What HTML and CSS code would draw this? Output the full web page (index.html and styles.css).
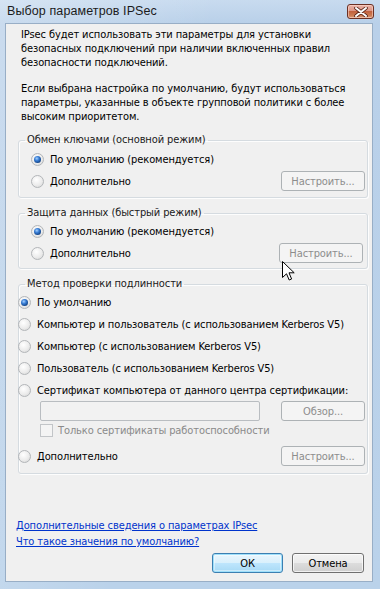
FILE: index.html
```html
<!DOCTYPE html>
<html lang="ru">
<head>
<meta charset="utf-8">
<title>Выбор параметров IPSec</title>
<link rel="stylesheet" href="styles.css">
</head>
<body>
<div class="window">
  <div class="titlebar">
    <span class="title">Выбор параметров IPSec</span>
    <span class="close">
      <svg width="14" height="10" viewBox="0 0 14 10">
        <path d="M2 1 L12 9 M12 1 L2 9" stroke="#5a2418" stroke-width="3.6" stroke-linecap="round"/>
        <path d="M2 1 L12 9 M12 1 L2 9" stroke="#ffffff" stroke-width="2" stroke-linecap="round"/>
      </svg>
    </span>
  </div>
  <div class="client">
    <p class="intro">IPsec будет использовать эти параметры для установки<br>безопасных подключений при наличии включенных правил<br>безопасности подключений.</p>
    <p class="intro second">Если выбрана настройка по умолчанию, будут использоваться<br>параметры, указанные в объекте групповой политики с более<br>высоким приоритетом.</p>

    <fieldset class="group g1">
      <legend>Обмен ключами (основной режим)</legend>
      <div class="row"><span class="radio checked"></span><span class="label">По умолчанию (рекомендуется)</span></div>
      <div class="row"><span class="radio"></span><span class="label">Дополнительно</span><button class="btn disabled">Настроить...</button></div>
    </fieldset>

    <fieldset class="group g2">
      <legend>Защита данных (быстрый режим)</legend>
      <div class="row"><span class="radio checked"></span><span class="label">По умолчанию (рекомендуется)</span></div>
      <div class="row"><span class="radio"></span><span class="label">Дополнительно</span><button class="btn disabled shifted">Настроить...</button></div>
      <svg class="cursor" width="13" height="20" viewBox="0 0 13 20">
        <path d="M0.5 0.5 L0.5 16.5 L4.5 12.8 L7.2 19 L9.6 18 L7 11.8 L12.2 11.8 Z" fill="#ffffff" stroke="#000000" stroke-width="1" stroke-linejoin="miter"/>
      </svg>
    </fieldset>

    <fieldset class="group g3">
      <legend>Метод проверки подлинности</legend>
      <div class="row"><span class="radio checked"></span><span class="label">По умолчанию</span></div>
      <div class="row"><span class="radio"></span><span class="label">Компьютер и пользователь (с использованием Kerberos V5)</span></div>
      <div class="row"><span class="radio"></span><span class="label">Компьютер (с использованием Kerberos V5)</span></div>
      <div class="row"><span class="radio"></span><span class="label">Пользователь (с использованием Kerberos V5)</span></div>
      <div class="row"><span class="radio"></span><span class="label">Сертификат компьютера от данного центра сертификации:</span></div>
      <div class="cert-row"><span class="textbox"></span><button class="btn disabled">Обзор...</button></div>
      <div class="check-row"><span class="checkbox"></span><span class="label muted">Только сертификаты работоспособности</span></div>
      <div class="row last"><span class="radio"></span><span class="label">Дополнительно</span><button class="btn disabled">Настроить...</button></div>
    </fieldset>

    <div class="footer">
      <a class="link" href="#">Дополнительные сведения о параметрах IPsec</a>
      <a class="link" href="#">Что такое значения по умолчанию?</a>
      <div class="actions">
        <button class="btn default">ОК</button>
        <button class="btn">Отмена</button>
      </div>
    </div>
  </div>
</div>
</body>
</html>
```

FILE: styles.css
```css
* { box-sizing: border-box; }

html, body {
  margin: 0;
  padding: 0;
}

body {
  width: 380px;
  height: 589px;
  overflow: hidden;
  font-family: "Liberation Sans Narrow", "DejaVu Sans Condensed", "Liberation Sans", Arial, sans-serif;
  font-size: 11px;
  letter-spacing: -0.1px;
  color: #000;
}

.window {
  width: 380px;
  height: 589px;
  display: flex;
  flex-direction: column;
  background:
    linear-gradient(100deg, rgba(255,255,255,0.25) 0%, rgba(255,255,255,0) 45%),
    linear-gradient(to bottom, #c8dbef 0px, #b9d0e9 23px, #bad2ea 100%);
}

.titlebar {
  height: 23px;
  flex: none;
  display: flex;
  align-items: flex-start;
  justify-content: space-between;
  padding: 4px 6px 0 7px;
}

.title {
  font-family: "Liberation Sans", Arial, sans-serif;
  font-size: 12.5px;
  line-height: 15px;
  color: #1b1b1b;
  letter-spacing: 0.1px;
}

.close {
  width: 27px;
  height: 15px;
  border: 1px solid #6b3024;
  border-radius: 3px;
  background: linear-gradient(to bottom, #eab3a8 0%, #dc9686 45%, #c2623f 50%, #cc7b52 80%, #d99a78 100%);
  box-shadow: inset 0 0 0 1px rgba(255,220,210,0.55);
  display: flex;
  align-items: center;
  justify-content: center;
}

.close svg { display: block; }

.client {
  flex: 1;
  margin: 0 7px 7px 5px;
  background: #f0f0f0;
  border: 1px solid #98aec6;
  display: flex;
  flex-direction: column;
  padding: 0 0 8px 0;
}

.intro {
  margin: 4px 0 0 15px;
  line-height: 14px;
}

.intro.second { margin-top: 12px; }

.group {
  position: relative;
  margin: 9px 4px 0 12px;
  padding: 1px 0 5px 0;
  border: 1px solid #d5dbe0;
  border-radius: 3px;
  box-shadow: inset 1px 1px 0 #fdfdfd, 1px 1px 0 #fdfdfd;
  min-width: 0;
}

.group legend {
  margin-left: 6px;
  padding: 0 2px;
  line-height: 14px;
  color: #1a1a1a;
}

.g2 { margin-top: 8px; padding: 0 0 4px 0; }
.g3 { margin-top: 8px; padding: 0 0 6px 0; }

.row {
  height: 22px;
  display: flex;
  align-items: center;
  padding-left: 12px;
  padding-right: 2px;
}

.g3 .row { padding-left: 0; margin-left: -1px; }

.label {
  margin-left: 6px;
  white-space: nowrap;
}

.muted { color: #8a8a8a; }

.radio {
  flex: none;
  width: 13px;
  height: 13px;
  border-radius: 50%;
  border: 1px solid #b3b6b9;
  background: radial-gradient(circle at 40% 35%, #ffffff 0%, #ececec 55%, #d3d3d3 100%);
  display: flex;
  align-items: center;
  justify-content: center;
}

.radio.checked::after {
  content: "";
  width: 7px;
  height: 7px;
  border-radius: 50%;
  background: radial-gradient(circle at 40% 35%, #a7d2ff 0%, #3a7fd6 35%, #16498f 70%, #0c2d63 100%);
}

.btn {
  font: inherit;
  letter-spacing: inherit;
  width: 84px;
  height: 20px;
  padding: 0;
  border: 1px solid #707070;
  border-radius: 3px;
  background: linear-gradient(to bottom, #f3f3f3 0%, #ebebeb 49%, #dddddd 50%, #cfcfcf 100%);
  color: #000;
  box-shadow: inset 0 0 0 1px rgba(255,255,255,0.7);
  flex: none;
}

.btn.disabled {
  border-color: #adb2b5;
  background: #f4f4f4;
  color: #8d8d8d;
  box-shadow: none;
  margin-left: auto;
}

.btn.shifted { margin-right: 2px; }

.cursor {
  position: absolute;
  left: 263px;
  top: 41px;
}

.cert-row {
  height: 20px;
  display: flex;
  align-items: center;
  padding-left: 21px;
  padding-right: 2px;
}

.textbox {
  width: 220px;
  height: 20px;
  border: 1px solid #b9bdc1;
  border-radius: 2px;
  background: #f2f2f2;
}

.check-row {
  height: 14px;
  margin-top: 2px;
  display: flex;
  align-items: center;
  padding-left: 21px;
}

.checkbox {
  width: 13px;
  height: 13px;
  border: 1px solid #c2c5c8;
  background: #f4f4f4;
}

.check-row .label { margin-left: 5px; }

.row.last { margin-top: 8px; }

.footer {
  margin-top: auto;
  display: flex;
  flex-direction: column;
  align-items: flex-start;
}

.link {
  margin-left: 10px;
  line-height: 16px;
  color: #0033cc;
  text-decoration: underline;
}

.actions {
  align-self: stretch;
  margin-top: 3px;
  display: flex;
  justify-content: flex-end;
  gap: 9px;
  padding-right: 8px;
}

.actions .btn { width: 72px; }

.btn.default {
  width: 71px;
  border-color: #3c7fb1;
  box-shadow: inset 0 0 0 1px #9fe0fb, inset 0 0 0 2px rgba(255,255,255,0.4);
  background: linear-gradient(to bottom, #eaf6fd 0%, #d9f0fc 49%, #bee6fd 50%, #a7d9f5 100%);
}
```
